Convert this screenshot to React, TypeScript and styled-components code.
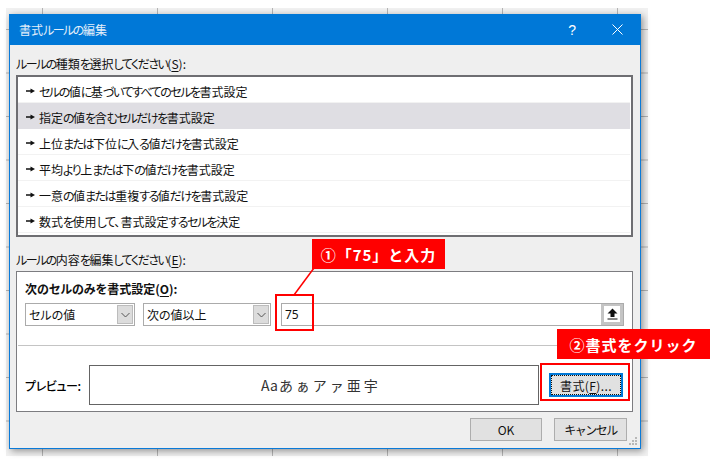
import React from "react";
import styled, { createGlobalStyle } from "styled-components";

const Global = createGlobalStyle`
  html, body { margin: 0; padding: 0; background: #fff; }
  body { width: 720px; height: 460px; overflow: hidden; font-family: "Noto Sans CJK JP", "Noto Sans", sans-serif; color: #111; font-feature-settings: "palt" 1; }
`;

const Sheet = styled.div`
  position: relative;
  margin: 8px 0 0 6px;
  width: 642px;
  height: 448px;
  box-sizing: border-box;
  padding: 6px 7px 7px 3px;
  background-color: #f1f1f1;
  background-image:
    linear-gradient(#b4b4b4 1px, transparent 1px),
    linear-gradient(90deg, #b4b4b4 1px, transparent 1px);
  background-size: 100% 43.5px, 115px 100%;
  background-position: 0 21px, 36px 0;
`;

const Dialog = styled.div`
  position: relative;
  height: 435px;
  box-sizing: border-box;
  border: 1px solid #0a7ad8;
  border-top: 0;
  background: #efefef;
  box-shadow: 2px 2px 7px rgba(0, 0, 0, 0.4);
  display: flex;
  flex-direction: column;
`;

const TitleBar = styled.div`
  height: 31px;
  margin: 0 -1px;
  background: #0078d7;
  color: #e4effa;
  display: flex;
  align-items: center;
  padding: 0 18px 0 10px;
  font-size: 12px;
  flex-shrink: 0;
`;

const TitleText = styled.span`
  flex: 1;
`;

const HelpGlyph = styled.span`
  font-family: "Liberation Sans", sans-serif;
  font-size: 14px;
  margin-right: 36px;
  color: #fff;
`;

const Body = styled.div`
  flex: 1;
  display: flex;
  flex-direction: column;
  padding: 0 7px 0 6px;
  position: relative;
`;

const GroupLabel = styled.div<{ $top: number }>`
  font-size: 12px;
  line-height: 16px;
  margin-top: ${(p) => p.$top}px;
  margin-bottom: 3px;
  u { text-underline-offset: 2px; }
`;

const RuleList = styled.div`
  height: 162px;
  box-sizing: border-box;
  border: 2px solid #6e6e72;
  background: #fff;
  padding-right: 1px;
`;

const RuleRow = styled.div<{ $selected?: boolean }>`
  height: 26px;
  box-sizing: border-box;
  display: flex;
  align-items: center;
  gap: 4px;
  padding: 3px 0 0 8px;
  font-size: 12px;
  background: ${(p) => (p.$selected ? "#dfdee3" : "#fff")};
  border-bottom: 1px solid ${(p) => (p.$selected ? "#dfdee3" : "#f2f2f2")};
`;

const KanaRun = styled.span`
  letter-spacing: -1.5px;
`;

const Panel = styled.div`
  height: 141px;
  box-sizing: border-box;
  border: 1px solid #7c7c80;
  background: #fff;
  display: flex;
  flex-direction: column;
`;

const Heading = styled.div`
  font-size: 12px;
  font-weight: 700;
  line-height: 16px;
  margin: 9px 0 0 8px;
  u { text-underline-offset: 2px; }
`;

const Controls = styled.div`
  display: flex;
  margin: 6px 0 0 8px;
  height: 23px;
`;

const Select = styled.div<{ $w: number; $gap: number }>`
  width: ${(p) => p.$w}px;
  margin-right: ${(p) => p.$gap}px;
  box-sizing: border-box;
  border: 1px solid #ababab;
  display: flex;
  align-items: center;
  justify-content: space-between;
  padding: 1px 1px 1px 3px;
  font-size: 12px;
`;

const Chevron = styled.span`
  width: 16px;
  height: 19px;
  background: #dcdcdc;
  border: 1px solid #bcbcbc;
  box-sizing: border-box;
  display: flex;
  align-items: center;
  justify-content: center;
`;

const ValueInput = styled.div`
  width: 343px;
  box-sizing: border-box;
  border: 1px solid #ababab;
  display: flex;
  align-items: center;
  justify-content: space-between;
  font-family: "Noto Sans", sans-serif;
  font-size: 12px;
  padding-left: 3px;
`;

const UpButton = styled.span`
  width: 22px;
  height: 100%;
  box-sizing: border-box;
  border: solid #c4c4c4;
  border-width: 2px 3px 3px 3px;
  background: #fff;
  display: flex;
  align-items: center;
  justify-content: center;
`;

const Divider = styled.div`
  height: 1px;
  background: #c4c4c4;
  margin: 19px 1px 0 1px;
`;

const PreviewRow = styled.div`
  display: flex;
  align-items: center;
  margin: 19px 0 0 8px;
  height: 40px;
`;

const PreviewLabel = styled.span`
  width: 64px;
  font-size: 12px;
  font-weight: 500;
  color: #000;
  flex-shrink: 0;
  letter-spacing: -0.4px;
`;

const PreviewBox = styled.div`
  width: 450px;
  height: 40px;
  box-sizing: border-box;
  border: 1px solid #646464;
  padding-left: 14px;
  display: flex;
  align-items: center;
  justify-content: center;
  font-size: 14px;
  font-feature-settings: normal;
  color: #333;
`;

const PreviewWide = styled.span`
  letter-spacing: 3px;
  margin-left: 1px;
`;

const FormatButton = styled.button`
  margin-left: 10px;
  width: 74px;
  height: 24px;
  box-sizing: border-box;
  border: 2px solid #0078d7;
  outline: 1px dotted #111;
  outline-offset: -3px;
  background: #e1e1e1;
  font: 12px "Noto Sans CJK JP", sans-serif;
  letter-spacing: 0.4px;
  color: #111;
  padding: 0;
  u { text-underline-offset: 2px; }
`;

const Footer = styled.div`
  display: flex;
  justify-content: flex-end;
  gap: 12px;
  margin-top: 6px;
  padding-right: 6px;
`;

const FooterButton = styled.button<{ $w: number }>`
  width: ${(p) => p.$w}px;
  height: 23px;
  box-sizing: border-box;
  border: 1px solid #adadad;
  background: #e1e1e1;
  font: 12px "Noto Sans CJK JP", sans-serif;
  color: #111;
  padding: 0;
`;

const Grip = styled.svg`
  position: absolute;
  right: 2px;
  bottom: 2px;
`;

const Callout = styled.div<{ $left: number; $top: number; $w: number }>`
  position: absolute;
  left: ${(p) => p.$left}px;
  top: ${(p) => p.$top}px;
  width: ${(p) => p.$w}px;
  height: 30px;
  background: #ff0000;
  color: #fff;
  font-size: 15px;
  font-weight: 700;
  letter-spacing: 1px;
  font-feature-settings: normal;
  display: flex;
  align-items: center;
  justify-content: center;
  white-space: nowrap;
`;

const Highlight = styled.div<{ $left: number; $top: number; $w: number; $h: number }>`
  position: absolute;
  left: ${(p) => p.$left}px;
  top: ${(p) => p.$top}px;
  width: ${(p) => p.$w}px;
  height: ${(p) => p.$h}px;
  box-sizing: border-box;
  border: 2px solid #ff0000;
`;

const Leader = styled.svg`
  position: absolute;
  left: 290px;
  top: 266px;
`;

const Arrow = () => (
  <svg width="9" height="6" viewBox="0 0 9 6">
    <path d="M0 2.2h4.5V0.6L9 3 4.5 5.4V3.8H0z" fill="#111" />
  </svg>
);

const Down = () => (
  <svg width="9" height="6" viewBox="0 0 9 6">
    <path d="M0.5 1l4 4 4-4" fill="none" stroke="#555" />
  </svg>
);

// The reference's UI font has narrow kana and full-width kanji, so kana runs are tightened.
const Narrow = ({ text }: { text: string }) => (
  <span>
    {text.split(/([\u3040-\u30ff]+)/).map((part, i) =>
      i % 2 ? <KanaRun key={i}>{part}</KanaRun> : part
    )}
  </span>
);

const rules = [
  "セルの値に基づいてすべてのセルを書式設定",
  "指定の値を含むセルだけを書式設定",
  "上位または下位に入る値だけを書式設定",
  "平均より上または下の値だけを書式設定",
  "一意の値または重複する値だけを書式設定",
  "数式を使用して、書式設定するセルを決定",
];

export default function App() {
  return (
    <>
      <Global />
      <Sheet>
        <Dialog>
          <TitleBar>
            <TitleText><Narrow text="書式ルールの編集" /></TitleText>
            <HelpGlyph>?</HelpGlyph>
            <svg width="11" height="11" viewBox="0 0 11 11">
              <path d="M0.5 0.5l10 10M10.5 0.5l-10 10" stroke="#fff" fill="none" />
            </svg>
          </TitleBar>
          <Body>
            <GroupLabel $top={11}><Narrow text="ルールの種類を選択してください" />(<u>S</u>):</GroupLabel>
            <RuleList>
              {rules.map((r, i) => (
                <RuleRow key={r} $selected={i === 1}>
                  <Arrow />
                  <Narrow text={r} />
                </RuleRow>
              ))}
            </RuleList>
            <GroupLabel $top={15}><Narrow text="ルールの内容を編集してください" />(<u>E</u>):</GroupLabel>
            <Panel>
              <Heading>次のセルのみを書式設定(<u>O</u>):</Heading>
              <Controls>
                <Select $w={110} $gap={8}>
                  セルの値
                  <Chevron><Down /></Chevron>
                </Select>
                <Select $w={128} $gap={10}>
                  次の値以上
                  <Chevron><Down /></Chevron>
                </Select>
                <ValueInput>
                  75
                  <UpButton>
                    <svg width="11" height="12" viewBox="0 0 11 12">
                      <path d="M5.5 0.5L10.5 5.5H7.5v3.5h-4V5.5H0.5z" fill="#111" />
                      <path d="M0.5 11h10" stroke="#111" />
                    </svg>
                  </UpButton>
                </ValueInput>
              </Controls>
              <Divider />
              <PreviewRow>
                <PreviewLabel>プレビュー:</PreviewLabel>
                <PreviewBox>Aa<PreviewWide>あぁアァ亜宇</PreviewWide></PreviewBox>
                <FormatButton>書式(<u>F</u>)...</FormatButton>
              </PreviewRow>
            </Panel>
            <Footer>
              <FooterButton $w={72}>OK</FooterButton>
              <FooterButton $w={73}><Narrow text="キャンセル" /></FooterButton>
            </Footer>
            <Grip width="9" height="9" viewBox="0 0 9 9">
              <path d="M6 0h2v2H6zM3 3h2v2H3zM6 3h2v2H6zM0 6h2v2H0zM3 6h2v2H3zM6 6h2v2H6z" fill="#b8b8b8" />
            </Grip>
          </Body>
        </Dialog>
      </Sheet>
      <Leader width="30" height="32" viewBox="0 0 30 32">
        <path d="M24 2L4 29" stroke="#ff0000" strokeWidth="1.5" fill="none" />
      </Leader>
      <Callout $left={312} $top={239} $w={133}>①「75」と入力</Callout>
      <Callout $left={557} $top={329} $w={153}>②書式をクリック</Callout>
      <Highlight $left={275} $top={294} $w={39} $h={37} />
      <Highlight $left={540} $top={363} $w={90} $h={38} />
    </>
  );
}
